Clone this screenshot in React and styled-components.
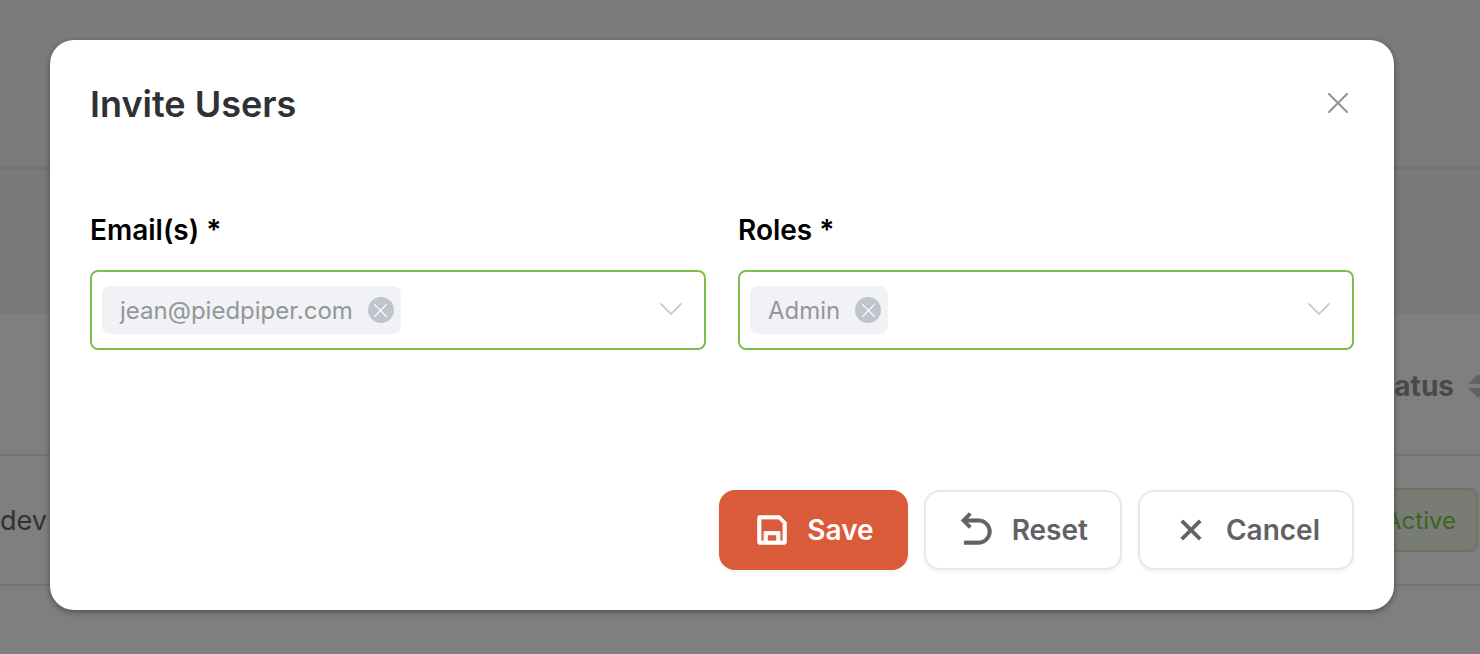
import React from "react";
import styled, { createGlobalStyle } from "styled-components";
import { RiSaveLine, RiArrowGoBackLine, RiCloseLine } from "react-icons/ri";

const GlobalStyle = createGlobalStyle`
  * {
    box-sizing: border-box;
  }

  body {
    margin: 0;
    overflow: hidden;
    font-family: Inter, "Liberation Sans", sans-serif;
  }

  button,
  input {
    font-family: inherit;
  }
`;

const CrossIcon = ({ size, width }) => (
  <svg width={size} height={size} viewBox="0 0 20 20" aria-hidden="true">
    <path
      d="M1 1L19 19M19 1L1 19"
      stroke="currentColor"
      strokeWidth={width}
      strokeLinecap="round"
      fill="none"
    />
  </svg>
);

const ChevronIcon = () => (
  <svg width="22" height="12" viewBox="0 0 22 12" aria-hidden="true">
    <path
      d="M1 1L11 11L21 1"
      stroke="currentColor"
      strokeWidth="1.7"
      strokeLinecap="round"
      strokeLinejoin="round"
      fill="none"
    />
  </svg>
);

const SortIcon = () => (
  <svg width="20" height="26" viewBox="0 0 20 26" aria-hidden="true">
    <path d="M0 11L10 1L20 11ZM0 15L10 25L20 15Z" fill="#c0c4cc" />
  </svg>
);

const TagField = ({ id, label, tags }) => (
  <div>
    <FieldLabel htmlFor={id}>{label} *</FieldLabel>
    <SelectBox>
      {tags.map((tag) => (
        <Tag key={tag}>
          {tag}
          <TagClose type="button" aria-label={`Remove ${tag}`}>
            <CrossIcon size={13} width={2} />
          </TagClose>
        </Tag>
      ))}
      <TagInput id={id} type="text" />
      <ChevronButton type="button" aria-label={`Open ${label}`}>
        <ChevronIcon />
      </ChevronButton>
    </SelectBox>
  </div>
);

const UsersPage = () => (
  <Page>
    <TopBar />
    <SubBar />
    <UsersTable>
      <tbody>
        <HeadRow>
          <th />
          <StatusHead>
            <SortLabel>
              Status
              <SortIcon />
            </SortLabel>
          </StatusHead>
        </HeadRow>
        <UserRow>
          <td>dev</td>
          <StatusCell>
            <Badge>Active</Badge>
          </StatusCell>
        </UserRow>
      </tbody>
    </UsersTable>
  </Page>
);

const App = () => {
  return (
    <>
      <GlobalStyle />
      <UsersPage />
      <Overlay>
        <Dialog role="dialog" aria-labelledby="invite-title">
          <DialogHeader>
            <Title id="invite-title">Invite Users</Title>
            <CloseButton type="button" aria-label="Close">
              <CrossIcon size={20} width={2} />
            </CloseButton>
          </DialogHeader>
          <Fields>
            <TagField
              id="emails"
              label="Email(s)"
              tags={["jean@piedpiper.com"]}
            />
            <TagField id="roles" label="Roles" tags={["Admin"]} />
          </Fields>
          <Footer>
            <Button type="button" $primary>
              <RiSaveLine />
              Save
            </Button>
            <Button type="button">
              <RiArrowGoBackLine />
              Reset
            </Button>
            <Button type="button">
              <RiCloseLine />
              Cancel
            </Button>
          </Footer>
        </Dialog>
      </Overlay>
    </>
  );
};

export default App;

const Page = styled.div`
  min-height: 100vh;
  overflow: hidden;
  background: #ffffff;
`;

const TopBar = styled.div`
  height: 170px;
  background: #f6f6f6;
  border-bottom: 4px solid #e4e7ed;
`;

const SubBar = styled.div`
  height: 144px;
  background: #f5f5f6;
`;

const UsersTable = styled.table`
  width: calc(100% + 16px);
  border-spacing: 0;

  th,
  td {
    padding: 0;
    border-bottom: 2px solid #e8e8ea;
  }
`;

const HeadRow = styled.tr`
  height: 142px;
`;

const UserRow = styled.tr`
  height: 130px;
  font-size: 27px;
  color: #606266;
`;

const StatusHead = styled.th`
  text-align: right;
  font-size: 28px;
  font-weight: 700;
  color: #909399;
`;

const SortLabel = styled.span`
  display: flex;
  justify-content: flex-end;
  align-items: center;
  gap: 14px;
  padding: 4px 8px 0 0;
`;

const StatusCell = styled.td`
  text-align: right;
`;

const Badge = styled.span`
  display: inline-flex;
  align-items: center;
  height: 64px;
  margin-right: 18px;
  padding: 0 20px;
  border: 2px solid #d1edc4;
  border-radius: 8px;
  background: #f0f9eb;
  color: #7ac943;
  font-size: 24px;
`;

const Overlay = styled.div`
  position: absolute;
  inset: 0;
  padding: 40px 86px 44px 50px;
  background: rgba(0, 0, 0, 0.5);
`;

const Dialog = styled.div`
  padding: 40px;
  border-radius: 24px;
  background: #ffffff;
  box-shadow: 0 2px 6px rgba(0, 0, 0, 0.4);
`;

const DialogHeader = styled.div`
  display: flex;
  justify-content: space-between;
  align-items: center;
  margin-bottom: 84px;
`;

const Title = styled.h2`
  margin: 0;
  font-size: 36px;
  line-height: 48px;
  font-weight: 600;
  color: #303133;
`;

const CloseButton = styled.button`
  display: flex;
  padding: 4px 6px 6px;
  border: none;
  background: none;
  color: #909399;
  cursor: pointer;
`;

const Fields = styled.div`
  display: grid;
  grid-template-columns: repeat(2, minmax(0, 1fr));
  gap: 32px;
`;

const FieldLabel = styled.label`
  display: block;
  margin-bottom: 22px;
  font-size: 28px;
  line-height: 36px;
  font-weight: 600;
  color: #000000;
`;

const SelectBox = styled.div`
  display: flex;
  align-items: center;
  height: 80px;
  padding: 0 22px 0 10px;
  border: 2px solid #7bc04b;
  border-radius: 8px;
`;

const Tag = styled.span`
  display: flex;
  align-items: center;
  gap: 15px;
  height: 48px;
  padding: 0 7px 0 18px;
  border-radius: 8px;
  background: #f0f2f5;
  color: #949699;
  font-size: 24px;
`;

const TagClose = styled.button`
  display: flex;
  justify-content: center;
  align-items: center;
  width: 26px;
  height: 26px;
  padding: 0;
  border: none;
  border-radius: 50%;
  background: #c0c4cc;
  color: #ffffff;
  cursor: pointer;
`;

const TagInput = styled.input`
  flex: 1;
  min-width: 0;
  margin-left: 12px;
  padding: 0;
  border: none;
  outline: none;
  background: none;
  font-size: 24px;
`;

const ChevronButton = styled.button`
  display: flex;
  padding: 0 0 2px;
  border: none;
  background: none;
  color: #c0c4cc;
  cursor: pointer;
`;

const Footer = styled.div`
  display: flex;
  justify-content: flex-end;
  gap: 16px;
  margin-top: 140px;
`;

const Button = styled.button`
  display: flex;
  align-items: center;
  gap: 16px;
  height: 80px;
  padding: 0 32px;
  border: 2px solid ${({ $primary }) => ($primary ? "#d95b39" : "#e8e8e8")};
  border-radius: 16px;
  background: ${({ $primary }) => ($primary ? "#d95b39" : "#ffffff")};
  box-shadow: 0 2px 4px rgba(0, 0, 0, 0.05);
  color: ${({ $primary }) => ($primary ? "#ffffff" : "#606266")};
  font-size: 28px;
  font-weight: 600;
  cursor: pointer;

  svg {
    width: 38px;
    height: 38px;
    stroke-width: 0.6;
  }
`;
